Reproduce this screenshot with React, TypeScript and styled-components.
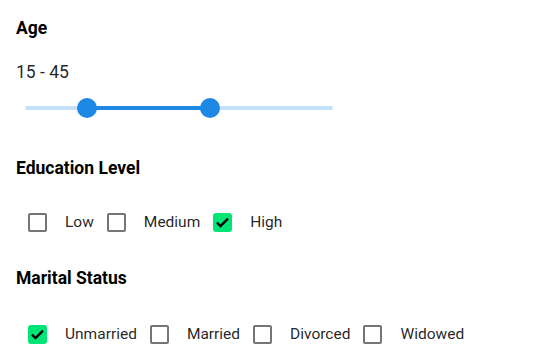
import React from "react";
import styled, { createGlobalStyle } from "styled-components";

const GlobalStyle = createGlobalStyle`
  html, body {
    margin: 0;
    padding: 0;
    background: #ffffff;
  }
  body {
    font-family: Roboto, "Liberation Sans", Arial, sans-serif;
    color: rgba(0, 0, 0, 0.87);
  }
`;

const ageRange = { min: 0, max: 75, from: 15, to: 45 };

const educationOptions = [
  { label: "Low", checked: false },
  { label: "Medium", checked: false },
  { label: "High", checked: true },
];

const maritalOptions = [
  { label: "Unmarried", checked: true },
  { label: "Married", checked: false },
  { label: "Divorced", checked: false },
  { label: "Widowed", checked: false },
];

const Panel = styled.div`
  display: flex;
  flex-direction: column;
  padding: 16px 16px;
`;

const Heading = styled.h6<{ $gap?: number }>`
  margin: ${(p) => p.$gap ?? 0}px 0 0;
  font-size: 17.5px;
  line-height: 24px;
  font-weight: 700;
  color: #000;
`;

const RangeValue = styled.div`
  margin-top: 20px;
  font-size: 17.5px;
  line-height: 24px;
  color: rgba(0, 0, 0, 0.87);
`;

const SliderRoot = styled.div`
  position: relative;
  margin: 12px 0 0 9px;
  width: 308px;
  height: 24px;
`;

const Rail = styled.div`
  position: absolute;
  left: 0;
  right: 0;
  top: 10px;
  height: 4px;
  border-radius: 2px;
  background: #c4e0f9;
`;

const Track = styled.div`
  position: absolute;
  top: 10px;
  height: 4px;
  background: #1e88e5;
`;

const Thumb = styled.div`
  position: absolute;
  top: 2px;
  width: 20px;
  height: 20px;
  margin-left: -10px;
  border-radius: 50%;
  background: #1e88e5;
`;

const OptionRow = styled.div<{ $gap: number }>`
  display: flex;
  align-items: center;
  gap: 13px;
  height: 42px;
  margin: ${(p) => p.$gap}px 0 0 12px;
`;

const Option = styled.label`
  display: flex;
  align-items: center;
  gap: 18px;
  font-size: 15.5px;
  line-height: 24px;
  color: rgba(0, 0, 0, 0.87);
`;

const Box = styled.span<{ $checked: boolean }>`
  display: flex;
  align-items: center;
  justify-content: center;
  box-sizing: border-box;
  width: 19px;
  height: 19px;
  border-radius: ${(p) => (p.$checked ? "3px" : "2px")};
  border: ${(p) => (p.$checked ? "none" : "2px solid #757575")};
  background: ${(p) => (p.$checked ? "#00e676" : "transparent")};
`;

const Check = () => (
  <svg width="19" height="19" viewBox="0 0 19 19">
    <path
      d="M4 9.6 7.5 13.1 15 5.6"
      fill="none"
      stroke="#000"
      strokeWidth="2.3"
    />
  </svg>
);

const CheckGroup = ({
  options,
  gap,
}: {
  options: { label: string; checked: boolean }[];
  gap: number;
}) => (
  <OptionRow $gap={gap}>
    {options.map((o) => (
      <Option key={o.label}>
        <Box $checked={o.checked}>{o.checked && <Check />}</Box>
        {o.label}
      </Option>
    ))}
  </OptionRow>
);

const App = () => {
  const span = ageRange.max - ageRange.min;
  const from = ((ageRange.from - ageRange.min) / span) * 100;
  const to = ((ageRange.to - ageRange.min) / span) * 100;

  return (
    <>
      <GlobalStyle />
      <Panel>
        <Heading>Age</Heading>
        <RangeValue>
          {ageRange.from} - {ageRange.to}
        </RangeValue>
        <SliderRoot>
          <Rail />
          <Track style={{ left: `${from}%`, width: `${to - from}%` }} />
          <Thumb style={{ left: `${from}%` }} />
          <Thumb style={{ left: `${to}%` }} />
        </SliderRoot>

        <Heading $gap={36}>Education Level</Heading>
        <CheckGroup options={educationOptions} gap={21} />

        <Heading $gap={23}>Marital Status</Heading>
        <CheckGroup options={maritalOptions} gap={23} />
      </Panel>
    </>
  );
};

export default App;
